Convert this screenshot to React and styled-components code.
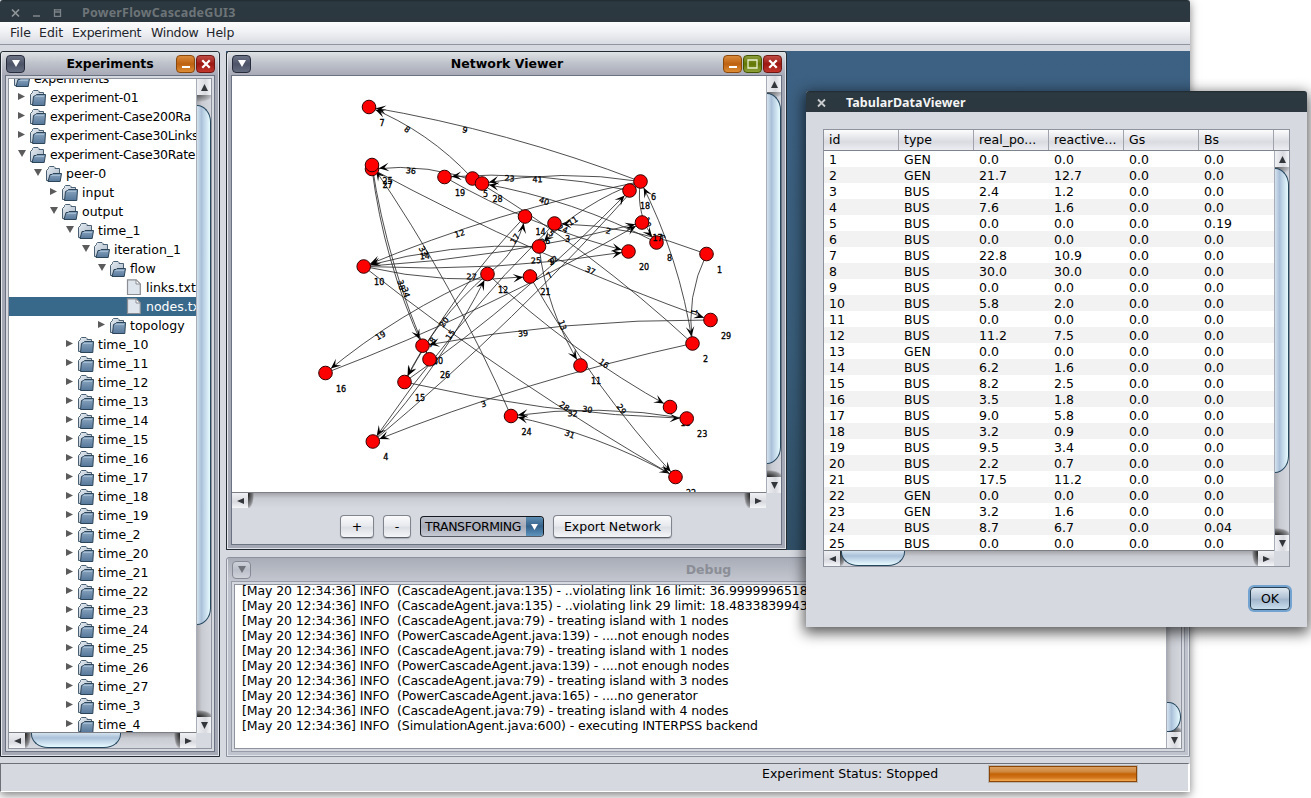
import React from "react";
import styled, { createGlobalStyle, css } from "styled-components";

const Global = createGlobalStyle`
  * { box-sizing: border-box; }
  html, body { margin: 0; padding: 0; }
  body {
    width: 1311px; height: 798px; overflow: hidden; background: #fff;
    font-family: "DejaVu Sans", sans-serif; font-size: 12.5px; color: #000;
  }
`;

const Screen = styled.div`
  position: relative; width: 1311px; height: 798px; overflow: hidden; background: #fff;
`;
const MainWindow = styled.div`
  width: 1190px; height: 792px; display: flex; flex-direction: column;
  background: #d6d9e0; box-shadow: 0 3px 9px rgba(0,0,0,.5);
`;
const TitleBar = styled.div`
  height: ${p => p.$h}px; flex: none; display: flex; align-items: center;
  padding-top: ${p => p.$pt || 0}px;
  background: linear-gradient(#1f2a30 0, #2c3940 2px, #2c373f 100%);
  border-radius: 3px 3px 0 0; color: ${p => p.$color};
  svg { display: block; }
`;
const TitleText = styled.span`
  font-family: "Noto Sans", sans-serif; font-weight: 700; font-size: 12.5px; line-height: 16px;
  letter-spacing: ${p => p.$ls || 0}px; margin-left: ${p => p.$ml}px; white-space: nowrap;
`;
const MenuBar = styled.div`
  height: 23px; flex: none; display: flex; align-items: center; padding: 0 0 1px 10px;
  background: linear-gradient(#fdfdfe, #f0f1f4 45%, #d8dbe2); border-bottom: 1px solid #8f949f;
`;
const MenuItem = styled.span`
  width: ${p => p.$w}px; white-space: nowrap; color: #23252b; letter-spacing: ${p => p.$ls || 0}px;
`;
const Desktop = styled.div`
  flex: none; height: 712px; display: flex; padding-top: 6px; gap: 6px;
`;
const RightColumn = styled.div` width: 964px; display: flex; flex-direction: column; gap: 7px; `;
const Backdrop = styled.div`
  height: 499px; background: linear-gradient(#3d6183, #385c78 60%, #304f66);
`;

const Frame = styled.section`
  width: ${p => p.$w}px; height: ${p => p.$h}px; flex: none; display: flex; flex-direction: column;
  border: 1px solid ${p => (p.$inactive ? "#8b919d" : "#222a32")}; border-radius: 3px 3px 0 0;
  background: ${p => (p.$inactive ? "#bfc3cd" : "#a5a9b5")};
  box-shadow: inset 1px 1px 0 #e6e8ee, inset -1px -1px 0 #dfe2e8;
  padding: 0 4px 4px;
`;
const FrameTitle = styled.div`
  height: 23px; flex: none; display: flex; align-items: center;
  margin: 0 -3px; padding: 0 3px 0 4px;
  background: ${p => (p.$inactive ? "linear-gradient(#a9adb7, #c3c6cf)" : "linear-gradient(#dfe3e5, #c0c4cc 45%, #a8abb7)")};
`;
const FrameName = styled.h1`
  flex: 1; margin: 0 0 0 ${p => p.$shift}px; text-align: center; font-size: 12.5px; font-weight: 700; line-height: 16px;
  letter-spacing: ${p => p.$ls || 0}px;
  color: ${p => (p.$inactive ? "#8b8e96" : "#000")};
`;
const tones = {
  slate: "linear-gradient(#6d7486, #4d5468 50%, #646c80)",
  pale: "linear-gradient(#cfd2d9, #bbbfc9 50%, #cfd2d9)",
  orange: "linear-gradient(#d98c3c, #bd6110 50%, #dd8d35)",
  green: "linear-gradient(#8c9d3d, #627605 50%, #8ea038)",
  red: "linear-gradient(#c04d46, #9c1812 50%, #c2362c)",
};
const edges = { slate: "#282d3d", pale: "#868a95", orange: "#8a480a", green: "#435500", red: "#711713" };
const FrameButton = styled.span`
  width: 19px; height: 18px; flex: none; margin-left: ${p => p.$ml || 0}px; border-radius: 4px;
  border: 1px solid ${p => edges[p.$tone]}; background: ${p => tones[p.$tone]};
  display: flex; align-items: center; justify-content: center;
`;
const Inset = styled.div`
  flex: 1; min-height: 0; display: flex; flex-direction: column;
  border: 1px solid ${p => p.$line || "#6b7281"}; background: #d6d9e0; padding: ${p => p.$p || 0};
`;
const ScrollPane = styled.div`
  flex: 1; min-height: 0; border: ${p => (p.$bare ? "0" : "1px solid #8f939e")}; display: grid;
  grid-template-columns: minmax(0, 1fr) 15px; grid-template-rows: minmax(0, 1fr) ${p => p.$hb ?? 15}px;
`;
const View = styled.div` background: #fff; overflow: hidden; border-bottom: ${p => p.$edge ? "1px solid #7d7f86" : "0"}; `;

const VBar = styled.div`
  display: flex; flex-direction: column; overflow: hidden; border-left: 1px solid #a9adb7;
  background: linear-gradient(90deg, #a9abb0, #c9cbd2 35%, #d4d7de);
`;
const HBar = styled.div`
  display: flex; overflow: hidden; background: linear-gradient(#a2a4a9, #c9cbd2 35%, #d6d9e0);
`;
const Arrow = styled.span`
  flex: none; display: flex; align-items: center; justify-content: center;
  width: ${p => (p.$h ? 16 : 14)}px; height: ${p => (p.$h ? 15 : 16)}px;
  background: linear-gradient(${p => (p.$h ? "" : "90deg,")} #eff0f3, #d8dae0 60%, #f5f6f8);
`;
const VTrack = styled.div`
  flex: 1; display: flex; flex-direction: column; padding-top: ${p => p.$lead}px;
  background: radial-gradient(ellipse 14px 7px at 2px 0, #333a 0, #5554 80%, #0000) top / 14px 10px no-repeat,
    radial-gradient(ellipse 14px 7px at 2px 100%, #222 0, #5558 80%, #0000) bottom / 14px 9px no-repeat;
`;
const HTrack = styled.div`
  flex: 1; display: flex; padding-left: ${p => p.$lead}px;
  background: radial-gradient(ellipse 6px 14px at 0 2px, #222 0, #5558 80%, #0000) left / 9px 15px no-repeat,
    radial-gradient(ellipse 6px 14px at 100% 2px, #222 0, #5558 80%, #0000) right / 9px 15px no-repeat;
`;
const VThumb = styled.div`
  height: ${p => p.$len}px; border: 1px solid #26475e; border-left: 0; border-radius: 0 14px 14px 0 / 0 17px 17px 0;
  background: linear-gradient(90deg, #d4e2ee, #a9c0d8 35%, #bfd4e6 55%, #e6fbff);
`;
const HThumb = styled.div`
  width: ${p => p.$len}px; height: 15px; border: 1px solid #26475e; border-top: 0; border-radius: 0 0 17px 17px / 0 0 14px 14px;
  background: linear-gradient(#d4e2ee, #a9c0d8 35%, #bfd4e6 55%, #e6fbff);
`;

const TreeList = styled.div` margin-top: -10px; `;
const TreeRow = styled.div`
  height: 19px; display: flex; align-items: center; white-space: nowrap; padding-left: ${p => Math.max(0, p.$depth * 16 - 9)}px;
  letter-spacing: ${p => (p.$tight ? -0.3 : 0)}px;
  ${p => p.$selected && css`background: #39698a; color: #fff;`}
`;
const Toggle = styled.span`
  width: ${p => (p.$root ? 5 : 14)}px; padding-left: ${p => (p.$root ? 0 : 2)}px; flex: none; display: flex; margin-top: -2px;
  svg { display: block; }
`;
const IconBox = styled.span` width: 20px; flex: none; display: flex; svg { display: block; } `;

const Controls = styled.div`
  height: 36px; flex: none; padding: 7px 0 0 108px; display: flex; align-items: flex-start;
`;
const Button = styled.button`
  height: 23px; width: ${p => p.$w}px; margin: 0 ${p => p.$mr || 0}px 0 0; padding: 0; flex: none;
  font: inherit; color: #000; border: 1px solid #80848d; border-bottom-color: #5c6068; border-radius: 4px;
  background: linear-gradient(#fbfbfc, #e8eaee 45%, #dcdfe5 55%, #f4f5f8); box-shadow: 0 1px 1px #aaaeb7;
  ${p => p.$focus && css`
    border-color: #263f52; box-shadow: 0 0 0 2px #73a4d1;
    background: linear-gradient(#dfe8f0, #b3c4d6 45%, #a2b7cc 55%, #c9dfee);
  `}
`;
const Combo = styled.div`
  width: 124px; height: 21px; margin: 1px 9px 0 0; display: flex; border: 1px solid #14191f; border-radius: 4px;
  border-bottom-color: #565b65; overflow: hidden; line-height: 19px; padding-left: 4px; white-space: nowrap;
  background: linear-gradient(#bcc0ca, #a6abb8 50%, #c6cad4); justify-content: space-between; letter-spacing: -0.4px;
`;
const ComboArrow = styled.span`
  width: 17px; display: flex; align-items: center; justify-content: center;
  background: linear-gradient(#5d8db3, #34628b 50%, #5e94bd);
`;

const Log = styled.div` padding: 0 0 0 7px; margin-top: -2px; letter-spacing: -0.105px; `;
const LogLine = styled.div` height: 15px; line-height: 15px; white-space: pre; `;

const StatusBar = styled.div`
  flex: 1; display: flex; align-items: center; margin: 6px 0 0; padding: 0 51px 8px 0; justify-content: flex-end;
  border: 1px solid #6d7077; border-right: 2px solid #fff; border-bottom: 1px solid #fff;
`;
const Status = styled.span` width: 227px; `;
const Progress = styled.div`
  width: 148px; height: 16px; border: 1px solid #8a4507; box-shadow: 0 0 0 1px #b9b5b0;
  background: linear-gradient(#dba062, #cf873c 35%, #c46206 50%, #d0751b 75%, #f4ab52);
`;

const Dialog = styled.div`
  position: absolute; left: 806px; top: 91px; width: 501px; height: 536px; background: #d6d9e0;
  box-shadow: 0 4px 14px 2px rgba(0,0,0,.65); border-radius: 3px 3px 0 0; display: flex; flex-direction: column;
`;
const DialogBody = styled.div`
  flex: 1; padding: 17px 17px 0; display: flex; flex-direction: column;
`;
const TableBox = styled.div`
  height: 438px; border: 1px solid #8f939e; display: flex; flex-direction: column; margin-bottom: 20px;
`;
const HeaderRow = styled.div`
  display: flex; flex: none; height: 21px; border-bottom: 1px solid #7f838c; background: linear-gradient(#fcfcfd, #d9dbe1 60%, #eceef2);
`;
const HeaderCell = styled.div`
  width: 75px; flex: none; padding-left: 5px; line-height: 19px; white-space: nowrap; border-right: 1px solid #a0a3ab;
`;
const DataRow = styled.div`
  display: flex; height: 16px; background: ${p => (p.$odd ? "#f2f2f2" : "#fff")};
`;
const Cell = styled.div` width: 75px; flex: none; padding-left: 5px; line-height: 18px; white-space: nowrap; `;
const DialogActions = styled.div` display: flex; justify-content: flex-end; `;

const Tri = ({ dir, color = "#33363b", w = 8, h = 7 }) => {
  const d = { up: `M0 ${h}L${w / 2} 0L${w} ${h}Z`, down: `M0 0L${w} 0L${w / 2} ${h}Z`, left: `M${w} 0L0 ${h / 2}L${w} ${h}Z`, right: `M0 0L${w} ${h / 2}L0 ${h}Z` }[dir];
  return <svg width={w} height={h}><path d={d} fill={color} /></svg>;
};

const FolderIcon = ({ open }) => (
  <svg width="16" height="16" viewBox="0 0 16 16">
    <defs>
      <linearGradient id="fold" x1="0" y1="0" x2="0" y2="1"><stop offset="0" stopColor="#8ba6c0" /><stop offset="1" stopColor="#56779a" /></linearGradient>
      <linearGradient id="back" x1="0" y1="0" x2="1" y2="1"><stop offset="0" stopColor="#e6edf3" /><stop offset="1" stopColor="#a6b5c5" /></linearGradient>
    </defs>
    <path d="M.5 14.5V4.5L2.5 2.5V1.5L3.5 .5H8L9 1.5V2.5H13.5V14.5Z" fill="url(#back)" stroke="#4b6072" />
    {open
      ? <path d="M2 15.5L4 8.5H6L7 7.5H15.5L14.2 15.5Z" fill="url(#fold)" stroke="#2d4559" />
      : <path d="M2.5 15.5L3.5 6.5L5.5 5.5L6.5 4.5H15.5L14.8 15.5Z" fill="url(#fold)" stroke="#2d4559" />}
    <path d={open ? "M5 9.5H14" : "M5 6.5H14"} stroke="#a3bbd0" />
  </svg>
);
const FileIcon = () => (
  <svg width="16" height="17" viewBox="0 0 16 17">
    <path d="M1.5 .8H10L14.3 5V15.5H1.5Z" fill="#dfe5ed" stroke="#8a8d93" strokeWidth="1.2" />
    <path d="M10 .8V5H14.3Z" fill="#fff" stroke="#8a8d93" />
  </svg>
);
const CrossGlyph = ({ s = 8, color = "#fff", w = 2 }) => (
  <svg width={s} height={s} viewBox="0 0 8 8"><path d="M1 1L7 7M7 1L1 7" stroke={color} strokeWidth={w} /></svg>
);

const Minimize = () => (
  <FrameButton $tone="orange"><svg width="10" height="10"><path d="M1 8H9" stroke="#fff" strokeWidth="2" /></svg></FrameButton>
);
const Maximize = () => (
  <FrameButton $tone="green" $ml={1}><svg width="11" height="10"><path d="M1 1H10V9H1Z" stroke="#e9efcf" strokeWidth="1.3" fill="none" /></svg></FrameButton>
);
const Close = () => <FrameButton $tone="red" $ml={1}><CrossGlyph s={10} w={1.8} /></FrameButton>;

const VScroll = ({ lead, len }) => (
  <VBar><Arrow><Tri dir="up" w={7} /></Arrow><VTrack $lead={lead}><VThumb $len={len} /></VTrack><Arrow><Tri dir="down" w={7} /></Arrow></VBar>
);
const HScroll = ({ lead = 0, len = 0 }) => (
  <HBar><Arrow $h><Tri dir="left" h={6} w={7} /></Arrow><HTrack $lead={lead}>{len > 0 && <HThumb $len={len} />}</HTrack><Arrow $h><Tri dir="right" h={6} w={7} /></Arrow></HBar>
);

const tree = [
  ["experiments", 0, "open"], ["experiment-01", 1], ["experiment-Case200Ra", 1], ["experiment-Case30Links", 1],
  ["experiment-Case30Rate", 1, "open"], ["peer-0", 2, "open"], ["input", 3], ["output", 3, "open"],
  ["time_1", 4, "open"], ["iteration_1", 5, "open"], ["flow", 6, "open"], ["links.txt", 7, "file"],
  ["nodes.txt", 7, "file", true], ["topology", 6],
  ...[10, 11, 12, 13, 14, 15, 16, 17, 18, 19, 2, 20, 21, 22, 23, 24, 25, 26, 27, 3, 4].map(n => [`time_${n}`, 4]),
];

const nodes = {
  7: [369, 107], 27: [372, 169], 25: [372, 165], 19: [444.5, 177], 5: [472.5, 178.5], 28: [482, 183.5],
  18: [629.5, 190.5], 6: [640.5, 181.5], 14: [525, 216.5], 3: [554.5, 223.5], 8: [656.5, 242.5], 17: [642, 222.5],
  9: [539, 246.5], 20: [628.5, 251.5], 1: [706.5, 254], 10: [363.7, 266.5], 12: [487.5, 274], 21: [530, 276.5],
  29: [710.5, 320], 2: [692.5, 343.5], 30: [422.5, 345.7], 26: [429.5, 359.3], 15: [404.5, 382], 16: [325.5, 373],
  11: [580.5, 365.5], 4: [372.8, 441.5], 24: [511, 416], 13: [670, 407], 23: [686.7, 418.5], 22: [675.5, 477],
};
const drawOrder = [7, 27, 25, 19, 5, 28, 18, 6, 14, 3, 8, 17, 9, 20, 1, 10, 12, 21, 29, 2, 30, 26, 15, 16, 11, 4, 24, 13, 23, 22];
const links = [
  [1, 2], [1, 3], [2, 4], [3, 4], [2, 5], [2, 6], [4, 6], [5, 7], [6, 7], [6, 8], [6, 9], [6, 10], [9, 11], [9, 10],
  [4, 12], [12, 13], [12, 14], [12, 15], [12, 16], [14, 15], [16, 17], [15, 18], [18, 19], [19, 20], [10, 20], [10, 17],
  [10, 21], [10, 22], [21, 22], [15, 23], [22, 24], [23, 24], [24, 25], [25, 26], [25, 27], [28, 27], [27, 29], [27, 30],
  [29, 30], [8, 28], [6, 28],
];

const GraphCanvas = styled.svg`
  display: block;
  text { font-family: "DejaVu Sans", sans-serif; font-size: 8px; fill: #000; stroke: #000; stroke-width: .3px; text-anchor: middle; }
`;

const Link = ({ from, to, name }) => {
  const [x1, y1] = nodes[from], [x2, y2] = nodes[to];
  const dx = x2 - x1, dy = y2 - y1, len = Math.hypot(dx, dy);
  const nx = -dy / len, ny = dx / len;
  const cx = (x1 + x2) / 2 + nx * 14, cy = (y1 + y2) / 2 + ny * 14;
  const t = Math.atan2(y2 - cy, x2 - cx);
  const tipX = x2 - Math.cos(t) * 7, tipY = y2 - Math.sin(t) * 7;
  let a = (Math.atan2(dy, dx) * 180) / Math.PI;
  if (a > 90) a -= 180;
  if (a < -90) a += 180;
  const lx = x1 + dx * 0.65 + nx * 3.5, ly = y1 + dy * 0.65 + ny * 3.5;
  return (
    <g>
      <path d={`M${x1} ${y1}Q${cx} ${cy} ${x2} ${y2}`} fill="none" stroke="#222" strokeWidth=".8" />
      {len > 12 && <path d="M0 0L-10 -4.3L-5.5 0L-10 4.3Z" transform={`translate(${tipX} ${tipY}) rotate(${(t * 180) / Math.PI})`} />}
      {len > 12 && <text transform={`translate(${lx} ${ly}) rotate(${a})`} y="3">{name}</text>}
    </g>
  );
};

const Graph = () => (
  <GraphCanvas width="534" height="417" viewBox="232 76 534 417">
    {links.map(([a, b], i) => <Link key={i} from={a} to={b} name={i + 1} />)}
    {drawOrder.map(n => (
      <g key={n}>
        <circle cx={nodes[n][0]} cy={nodes[n][1]} r="6.8" fill="#f00" stroke="#300" />
        <text x={nodes[n][0] + (n > 9 ? 15.5 : 13)} y={nodes[n][1] + 18.5}>{n}</text>
      </g>
    ))}
  </GraphCanvas>
);

const log = [
  "(CascadeAgent.java:135) - ..violating link 16 limit: 36.99999965186",
  "(CascadeAgent.java:135) - ..violating link 29 limit: 18.48338399435",
  "(CascadeAgent.java:79) - treating island with 1 nodes",
  "(PowerCascadeAgent.java:139) - ....not enough nodes",
  "(CascadeAgent.java:79) - treating island with 1 nodes",
  "(PowerCascadeAgent.java:139) - ....not enough nodes",
  "(CascadeAgent.java:79) - treating island with 3 nodes",
  "(PowerCascadeAgent.java:165) - ....no generator",
  "(CascadeAgent.java:79) - treating island with 4 nodes",
  "(SimulationAgent.java:600) - executing INTERPSS backend",
];

const rows = [
  ["GEN", "0.0", "0.0"], ["GEN", "21.7", "12.7"], ["BUS", "2.4", "1.2"], ["BUS", "7.6", "1.6"], ["BUS", "0.0", "0.0", "0.19"],
  ["BUS", "0.0", "0.0"], ["BUS", "22.8", "10.9"], ["BUS", "30.0", "30.0"], ["BUS", "0.0", "0.0"], ["BUS", "5.8", "2.0"],
  ["BUS", "0.0", "0.0"], ["BUS", "11.2", "7.5"], ["GEN", "0.0", "0.0"], ["BUS", "6.2", "1.6"], ["BUS", "8.2", "2.5"],
  ["BUS", "3.5", "1.8"], ["BUS", "9.0", "5.8"], ["BUS", "3.2", "0.9"], ["BUS", "9.5", "3.4"], ["BUS", "2.2", "0.7"],
  ["BUS", "17.5", "11.2"], ["GEN", "0.0", "0.0"], ["GEN", "3.2", "1.6"], ["BUS", "8.7", "6.7", "0.04"], ["BUS", "0.0", "0.0"],
];

export default function App() {
  return (
    <Screen>
      <Global />
      <MainWindow>
        <TitleBar $h={22} $pt={3} $color="#6d7478">
          <svg width="70" height="12" viewBox="0 0 70 12">
            <path d="M12 2.5L19 9.5M19 2.5L12 9.5" stroke="#90969a" strokeWidth="1.7" />
            <path d="M33 9H40" stroke="#7c8388" strokeWidth="1.6" />
            <path d="M54 2.8H61M54 5H61M54.5 2V9.3H60.5V2" stroke="#7c8388" strokeWidth="1.3" fill="none" />
          </svg>
          <TitleText $ml={12} $ls={0.2}>PowerFlowCascadeGUI3</TitleText>
        </TitleBar>
        <MenuBar>
          <MenuItem $w={29}>File</MenuItem><MenuItem $w={33}>Edit</MenuItem><MenuItem $w={79} $ls={-0.3}>Experiment</MenuItem>
          <MenuItem $w={55} $ls={-0.3}>Window</MenuItem><MenuItem $w={40}>Help</MenuItem>
        </MenuBar>
        <Desktop>
          <Frame $w={220} $h={706}>
            <FrameTitle>
              <FrameButton $tone="slate"><Tri dir="down" color="#fff" /></FrameButton>
              <FrameName $shift={19} $ls={-0.1}>Experiments</FrameName>
              <Minimize /><Close />
            </FrameTitle>
            <Inset $p="2px">
              <ScrollPane>
                <View $edge>
                  <TreeList>
                    {tree.map(([name, depth, kind, selected], i) => (
                      <TreeRow key={i} $depth={depth} $selected={selected} $tight={name.startsWith("experiment")}>
                        <Toggle $root={depth === 0}>{kind !== "file" && depth > 0 && (kind === "open"
                          ? <Tri dir="down" color="#5b5b5b" w={8} h={7} /> : <Tri dir="right" color="#5b5b5b" w={7} h={7} />)}</Toggle>
                        <IconBox>{kind === "file" ? <FileIcon /> : <FolderIcon open={kind === "open"} />}</IconBox>
                        {name}
                      </TreeRow>
                    ))}
                  </TreeList>
                </View>
                <VScroll lead={10} len={520} />
                <HScroll lead={6} len={90} />
              </ScrollPane>
            </Inset>
          </Frame>
          <RightColumn>
            <Backdrop>
              <Frame $w={561} $h={499}>
                <FrameTitle>
                  <FrameButton $tone="slate"><Tri dir="down" color="#fff" /></FrameButton>
                  <FrameName $shift={40}>Network Viewer</FrameName>
                  <Minimize /><Maximize /><Close />
                </FrameTitle>
                <Inset>
                  <ScrollPane $bare>
                    <View $edge><Graph /></View>
                    <VScroll lead={1} len={371} />
                    <HScroll />
                  </ScrollPane>
                  <Controls>
                    <Button $w={34} $mr={9}>+</Button>
                    <Button $w={28} $mr={9}>-</Button>
                    <Combo>TRANSFORMING<ComboArrow><Tri dir="down" color="#fff" w={7} h={6} /></ComboArrow></Combo>
                    <Button $w={119}>Export Network</Button>
                  </Controls>
                </Inset>
              </Frame>
            </Backdrop>
            <Frame $w={964} $h={200} $inactive>
              <FrameTitle $inactive>
                <FrameButton $tone="pale"><Tri dir="down" color="#6f7278" /></FrameButton>
                <FrameName $inactive $shift={-19}>Debug</FrameName>
              </FrameTitle>
              <Inset $p="2px" $line="#979ca8">
                <ScrollPane $hb={0}>
                  <View>
                    <Log>{log.map((l, i) => <LogLine key={i}>{"[May 20 12:34:36] INFO  " + l}</LogLine>)}</Log>
                  </View>
                  <VScroll lead={101} len={30} />
                </ScrollPane>
              </Inset>
            </Frame>
          </RightColumn>
        </Desktop>
        <StatusBar><Status>Experiment Status: Stopped</Status><Progress /></StatusBar>
      </MainWindow>
      <Dialog>
        <TitleBar $h={21} $pt={2} $color="#f3f4f4">
          <svg width="22" height="10" viewBox="0 0 22 10"><path d="M12 1.5L19 8.5M19 1.5L12 8.5" stroke="#c9cccf" strokeWidth="1.8" /></svg>
          <TitleText $ml={18} $ls={0.05}>TabularDataViewer</TitleText>
        </TitleBar>
        <DialogBody>
          <TableBox>
            <HeaderRow>{["id", "type", "real_po...", "reactive...", "Gs", "Bs"].map(h => <HeaderCell key={h}>{h}</HeaderCell>)}</HeaderRow>
            <ScrollPane $bare>
              <View $edge>
                {rows.map(([type, p, q, bs = "0.0"], i) => (
                  <DataRow key={i} $odd={i % 2 === 1}>
                    {[i + 1, type, p, q, "0.0", bs].map((v, k) => <Cell key={k}>{v}</Cell>)}
                  </DataRow>
                ))}
              </View>
              <VScroll lead={1} len={305} />
              <HScroll lead={1} len={64} />
            </ScrollPane>
          </TableBox>
          <DialogActions><Button $w={40} $focus>OK</Button></DialogActions>
        </DialogBody>
      </Dialog>
    </Screen>
  );
}
